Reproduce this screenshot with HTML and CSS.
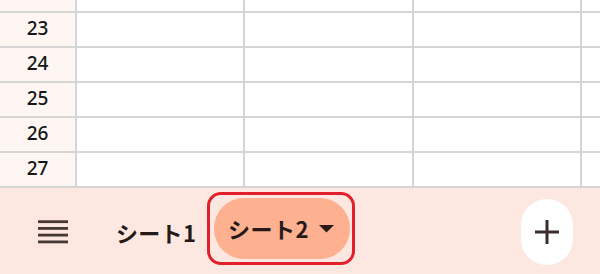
FILE: index.html
```html
<!DOCTYPE html>
<html lang="ja">
<head>
<meta charset="utf-8">
<link rel="stylesheet" href="styles.css">
</head>
<body>
<div class="sheet">
  <div class="grid">
    <div class="rh"></div><div class="c"></div><div class="c"></div><div class="c"></div><div class="c"></div>
    <div class="rh">23</div><div class="c"></div><div class="c"></div><div class="c"></div><div class="c"></div>
    <div class="rh">24</div><div class="c"></div><div class="c"></div><div class="c"></div><div class="c"></div>
    <div class="rh">25</div><div class="c"></div><div class="c"></div><div class="c"></div><div class="c"></div>
    <div class="rh">26</div><div class="c"></div><div class="c"></div><div class="c"></div><div class="c"></div>
    <div class="rh">27</div><div class="c"></div><div class="c"></div><div class="c"></div><div class="c"></div>
  </div>
  <div class="bar">
    <div class="menu">
      <svg width="30" height="24" viewBox="0 0 30 24"><g fill="#463834"><rect x="0" y="0.3" width="30" height="2.8"/><rect x="0" y="7" width="30" height="2.8"/><rect x="0" y="13.7" width="30" height="2.8"/><rect x="0" y="20.5" width="30" height="2.8"/></g></svg>
    </div>
    <div class="tab first">シート1</div>
    <div class="active-wrap">
      <div class="tab active">シート2<svg class="caret" width="15" height="8" viewBox="0 0 15 8"><path d="M0 0H15L7.5 7.5Z" fill="#2b1a16"/></svg></div>
      <div class="mark"></div>
    </div>
    <div class="spacer"></div>
    <div class="add">
      <svg width="24" height="24" viewBox="0 0 24 24"><path d="M12 0V24M0 12H24" stroke="#3b2e2a" stroke-width="3"/></svg>
    </div>
  </div>
</div>
</body>
</html>
```
FILE: styles.css
```css
html, body {
  margin: 0;
  padding: 0;
  background: #ffffff;
}
body {
  font-family: "Noto Sans CJK JP", "Noto Sans", sans-serif;
  width: 600px;
  height: 274px;
  overflow: hidden;
}
.sheet {
  display: flex;
  flex-direction: column;
  height: 274px;
}
.grid {
  display: grid;
  grid-template-columns: 75px 166px 167px 166px 1fr;
  grid-template-rows: 11px repeat(5, 33px);
  gap: 2px;
  padding-bottom: 2px;
  background: #d5d5d5;
}
.rh {
  background: #fdf6f3;
  color: #161616;
  font-family: "Noto Sans", sans-serif;
  font-size: 19px;
  font-weight: 500;
  display: flex;
  align-items: center;
  justify-content: center;
  padding-bottom: 3px;
  box-sizing: border-box;
}
.c {
  background: #ffffff;
}
.bar {
  flex: 1;
  background: #fde8e1;
  display: flex;
  align-items: center;
  padding: 0 27px 0 38px;
}
.menu {
  display: flex;
  width: 30px;
  height: 24px;
  margin-top: 2px;
}
.tab {
  font-size: 22px;
  font-weight: 700;
  color: #241a17;
  line-height: 1;
}
.tab.first {
  margin-left: 48px;
  width: 98px;
  margin-top: 1px;
  letter-spacing: 0.3px;
}
.active-wrap {
  position: relative;
  margin-top: -5px;
}
.tab.active {
  background: #fdb190;
  height: 61px;
  width: 136px;
  box-sizing: border-box;
  border-radius: 30px;
  display: flex;
  align-items: center;
  padding-left: 14px;
  padding-bottom: 1px;
  letter-spacing: 0.5px;
}
.caret {
  margin-left: 10px;
  margin-top: 2px;
}
.mark {
  position: absolute;
  left: -7px;
  top: -6px;
  right: -5px;
  bottom: -6px;
  border: 3.5px solid #e1202b;
  border-radius: 14px;
}
.spacer {
  flex: 1;
}
.add {
  width: 52px;
  height: 66px;
  background: #ffffff;
  border-radius: 26px;
  display: flex;
  align-items: center;
  justify-content: center;
  margin-top: 2px;
}
```
